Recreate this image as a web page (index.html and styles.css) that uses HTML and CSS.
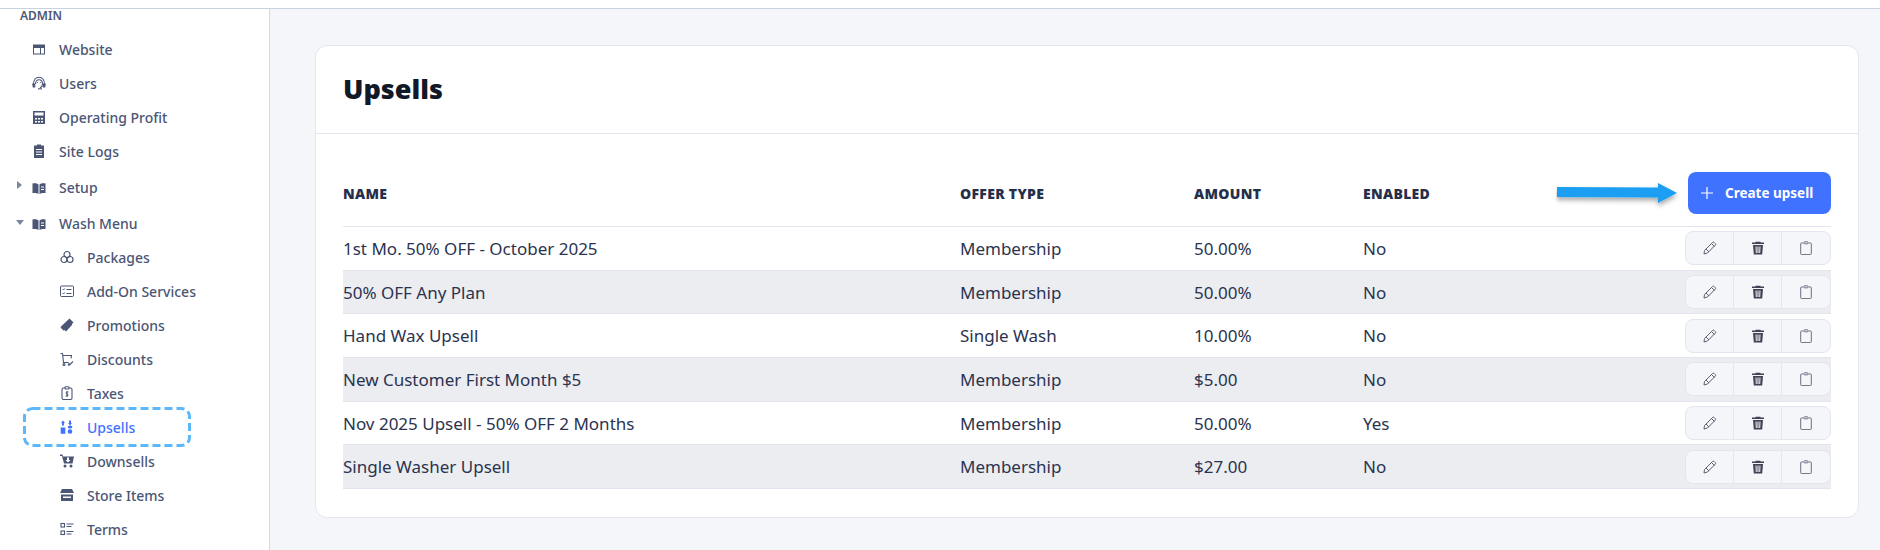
FILE: index.html
```html
<!DOCTYPE html>
<html lang="en">
  <head>
    <meta charset="UTF-8" />
    <meta name="viewport" content="width=device-width, initial-scale=1.0" />
    <title>Upsells</title>
    <link rel="stylesheet" href="styles.css">
  </head>
  <body>
    <div class="topbar"></div>
    <div class="layout">
      <aside class="sidebar">
        <div class="nav-title">ADMIN</div>
        <nav class="nav-group">
          <a class="nav-item">
            <svg class="nav-icon" viewBox="0 0 14 14"><path d="M1 2.500h12v10H1z M2 6v5.500h6V6z M9 6v5.500h3V6z" fill="#4b5675" fill-rule="evenodd"/></svg>
            Website
          </a>
          <a class="nav-item">
            <svg class="nav-icon" viewBox="0 0 14 14" fill="none" stroke="#4b5675" stroke-width="1.100"><path d="M1.500 8.500C1.500 4 3.800 1.200 7 1.200s5.500 2.800 5.500 7.300"/><path d="M3.500 8c0-2.500 1.500-4.300 3.500-4.300s3.500 1.800 3.500 4.300c0 2-1.200 3.200-2.500 3.800"/><path d="M6 12.800h4"/><path d="M.8 8h1.900v3H1.300z" fill="#4b5675"/><path d="M13.200 8h-1.900v3h1.400z" fill="#4b5675"/><path d="M5.500 6.300v.6M8.500 6.300v.6"/></svg>
            Users
          </a>
          <a class="nav-item">
            <svg class="nav-icon" viewBox="0 0 14 14"><path d="M1 1h12v13H1z M2.500 2.500v3h9v-3z M3 8v1.500h2V8z M6 8v1.500h2V8z M9 8v1.500h2V8z M3 11v1.500h2V11z M6 11v1.500h2V11z M9 11v1.500h2V11z" fill="#4b5675" fill-rule="evenodd"/></svg>
            Operating Profit
          </a>
          <a class="nav-item">
            <svg class="nav-icon" viewBox="0 0 14 14"><path d="M5 1.500V.5h4v1h3v12.500H2V1.500z M4 5v1h6V5z M4 7.500v1h6v-1z M4 10v1h6v-1z" fill="#4b5675" fill-rule="evenodd"/></svg>
            Site Logs
          </a>
        </nav>
        <a class="nav-item nav-parent">
          <span class="caret caret-right"></span>
          <svg class="nav-icon" viewBox="0 0 14 14"><path d="M0.500 2.500C3 2 5 2.200 6.500 3.500V13C5 12 3 11.800 .5 12z" fill="#4b5675"/><path d="M7.500 3.500C9 2.200 11 2 13.500 2.500V12C11 11.800 9 12 7.500 13z M9 5.500v1h3v-1z M9 8v1h3V8z" fill="#4b5675" fill-rule="evenodd"/></svg>
          Setup
        </a>
        <a class="nav-item nav-parent">
          <span class="caret caret-down"></span>
          <svg class="nav-icon" viewBox="0 0 14 14"><path d="M0.500 2.500C3 2 5 2.200 6.500 3.500V13C5 12 3 11.800 .5 12z" fill="#4b5675"/><path d="M7.500 3.500C9 2.200 11 2 13.500 2.500V12C11 11.800 9 12 7.500 13z M9 5.500v1h3v-1z M9 8v1h3V8z" fill="#4b5675" fill-rule="evenodd"/></svg>
          Wash Menu
        </a>
        <nav class="nav-sub">
          <a class="nav-item">
            <svg class="nav-icon" viewBox="0 0 14 14" fill="none" stroke="#4b5675" stroke-width="1.200"><circle cx="7" cy="4.500" r="3"/><circle cx="4" cy="9.500" r="3"/><circle cx="10" cy="9.500" r="3"/></svg>
            Packages
          </a>
          <a class="nav-item">
            <svg class="nav-icon" viewBox="0 0 14 14" fill="none" stroke="#4b5675" stroke-width="1"><rect x=".5" y="2" width="13" height="10.500" rx="1"/><path d="M2.500 5l1 1 1.200-1.500M2.500 9l1 1 1.200-1.500M6.500 5.500h5M6.500 9.500h5"/></svg>
            Add-On Services
          </a>
          <a class="nav-item">
            <svg class="nav-icon" viewBox="0 0 14 14"><path d="M9.500 .5L13.500 4.500 12 6 12 7 6 13.500 4.500 12 3.500 12.500 .5 9.500 1.500 8z" fill="#4b5675"/></svg>
            Promotions
          </a>
          <a class="nav-item">
            <svg class="nav-icon" viewBox="0 0 14 14" fill="none" stroke="#4b5675" stroke-width="1.100"><path d="M.5 1.500h2l1 9h5M3 3.500h8.500l-.5 3"/><circle cx="4" cy="12.500" r="1"/><circle cx="9" cy="12.500" r=".8"/><path d="M10 12.500l3-3"/></svg>
            Discounts
          </a>
          <a class="nav-item">
            <svg class="nav-icon" viewBox="0 0 14 14" fill="none" stroke="#4b5675" stroke-width="1.100"><rect x="2" y="2" width="10" height="11.500" rx="1.500"/><rect x="5" y=".7" width="4" height="2.300" rx=".8" fill="#fff"/><path d="M8.500 6H6.300v2h1.500v2H5.500M7 5v6" stroke-width=".9"/></svg>
            Taxes
          </a>
          <a class="nav-item nav-active">
            <svg class="nav-icon" viewBox="0 0 14 14"><path d="M3 .5L5 3H4v2.500H2V3H1z M.7 7.500h4.600v6.200H.7z M10 5.500L8 3h1V.5h2V3h1z M7.700 7a2.300 1.500 0 1 0 4.600 0 2.300 1.500 0 1 0-4.600 0z M7.700 11.500a2.300 2.300 0 1 0 4.600 0 2.300 2.300 0 1 0-4.600 0z" fill="#3e72ff"/></svg>
            Upsells
            <svg class="focus-ring" viewBox="0 0 168 40" width="168" height="40"><rect x="1.500" y="1.500" width="165" height="37" rx="8" fill="none" stroke="#5cb8fb" stroke-width="3" stroke-dasharray="8 4"/></svg>
          </a>
          <a class="nav-item">
            <svg class="nav-icon" viewBox="0 0 14 14"><path d="M0 .5h2.500l.5 2h11l-1.500 7H4L2 2H0z M7 3.500v2.500H5.500L8 8.500 10.500 6H9V3.500z" fill="#4b5675" fill-rule="evenodd"/><circle cx="5" cy="12" r="1.500" fill="#4b5675"/><circle cx="11" cy="12" r="1.500" fill="#4b5675"/></svg>
            Downsells
          </a>
          <a class="nav-item">
            <svg class="nav-icon" viewBox="0 0 14 14"><path d="M2 1h10l2 4H0z M1 6.500h12V13H1z M3 8.500v1.500h8V8.500z" fill="#4b5675" fill-rule="evenodd"/></svg>
            Store Items
          </a>
          <a class="nav-item">
            <svg class="nav-icon" viewBox="0 0 14 14" fill="none" stroke="#4b5675" stroke-width="1.100"><rect x="1" y="1.500" width="3.500" height="3.500"/><rect x="1" y="9" width="3.500" height="3.500"/><path d="M6.500 2h7M6.500 4.500h5M6.500 9.500h7M6.500 12h5"/></svg>
            Terms
          </a>
        </nav>
      </aside>

      <main class="content">
        <section class="card">
          <header class="card-header">
            <h1>Upsells</h1>
          </header>
          <div class="card-body">
            <table class="upsell-table">
              <colgroup>
                <col class="col-name">
                <col class="col-type">
                <col class="col-amount">
                <col class="col-enabled">
                <col>
              </colgroup>
              <thead>
                <tr>
                  <th>NAME</th>
                  <th>OFFER TYPE</th>
                  <th>AMOUNT</th>
                  <th>ENABLED</th>
                  <th class="col-actions">
                    <button class="create-btn">
                      <svg viewBox="0 0 12 12" width="12" height="12" fill="none" stroke="#fff" stroke-width="1.200"><path d="M6 0v12M0 6h12"/></svg>
                      Create upsell
                    </button>
                  </th>
                </tr>
              </thead>
              <tbody id="rows"></tbody>
            </table>
          </div>
        </section>
      </main>
    </div>

    <svg class="callout-arrow" viewBox="0 0 126 30" width="126" height="30">
      <defs>
        <filter id="arrow-shadow" x="-10%" y="-50%" width="120%" height="200%">
          <feDropShadow dx="0" dy="3" stdDeviation="2.500" flood-color="#000" flood-opacity="0.35"/>
        </filter>
      </defs>
      <path d="M1 4L102 4.500V0L121 10 102 20V14.500L1 14z" fill="#1a9ff2" filter="url(#arrow-shadow)"/>
    </svg>

    <script>
      const upsells = [
        { name: "1st Mo. 50% OFF - October 2025", type: "Membership", amount: "50.00%", enabled: "No" },
        { name: "50% OFF Any Plan", type: "Membership", amount: "50.00%", enabled: "No" },
        { name: "Hand Wax Upsell", type: "Single Wash", amount: "10.00%", enabled: "No" },
        { name: "New Customer First Month $5", type: "Membership", amount: "$5.00", enabled: "No" },
        { name: "Nov 2025 Upsell - 50% OFF 2 Months", type: "Membership", amount: "50.00%", enabled: "Yes" },
        { name: "Single Washer Upsell", type: "Membership", amount: "$27.00", enabled: "No" },
      ];

      const actions = `
        <div class="btn-group">
          <button class="icon-btn" aria-label="Edit">
            <svg viewBox="0 0 14 14" width="14" height="14" fill="none" stroke="#5b5f6e" stroke-width="1"><path d="M1.500 9.500L9.500 1.500a1.200 1.200 0 0 1 1.700 0l1 1a1.200 1.200 0 0 1 0 1.700L4.500 12 1 13z"/><path d="M8.500 2.500l3 3M3 8l3 3"/></svg>
          </button>
          <button class="icon-btn" aria-label="Delete">
            <svg viewBox="0 0 14 14" width="14" height="14"><path d="M4.500 1.500V.7h5v.8H13V3H1V1.500z M2 4h10l-.8 9.500H2.800z M4.500 5.500l.3 6.500h1L5.500 5.500z M6.500 5.500V12h1V5.500z M8.500 5.500L8.200 12h1l.3-6.500z" fill="#3f4254" fill-rule="evenodd"/></svg>
          </button>
          <button class="icon-btn" aria-label="Copy">
            <svg viewBox="0 0 14 14" width="14" height="14" fill="none" stroke="#6b6f80" stroke-width="1"><path d="M4.500 2H2.500a.8.8 0 0 0-.8.800v10a.8.8 0 0 0 .8.800h9a.8.8 0 0 0 .8-.8v-10a.8.8 0 0 0-.8-.8H9.500"/><rect x="5" y=".8" width="4" height="2" rx=".6"/></svg>
          </button>
        </div>
      `;

      document.getElementById("rows").innerHTML = upsells
        .map(
          (u) => `
          <tr>
            <td>${u.name}</td>
            <td>${u.type}</td>
            <td>${u.amount}</td>
            <td>${u.enabled}</td>
            <td class="col-actions">${actions}</td>
          </tr>
        `
        )
        .join("");
    </script>
  </body>
</html>
```

FILE: styles.css
```css
* {
  margin: 0;
  padding: 0;
  box-sizing: border-box;
}

html,
body {
  height: 550px;
  overflow: hidden;
}

body {
  background-color: #f5f6fa;
  color: #252f4a;
  font-family: "Noto Sans", "Open Sans", sans-serif;
  position: relative;
}

.topbar {
  height: 9px;
  background-color: #fff;
  border-bottom: 1px solid #c9d2e3;
}

.layout {
  display: flex;
  height: 541px;
}

.sidebar {
  width: 270px;
  flex-shrink: 0;
  background-color: #fff;
  border-right: 1px solid #d5d9e6;
  color: #4b5675;
}

.nav-title {
  font-size: 12px;
  font-weight: 600;
  line-height: 16px;
  padding-left: 20px;
  margin-top: -1px;
  margin-bottom: 8px;
}

.nav-item {
  position: relative;
  display: flex;
  align-items: center;
  height: 34px;
  padding-left: 32px;
  font-size: 14px;
  font-weight: 500;
  white-space: nowrap;
}

.nav-icon {
  width: 14px;
  height: 14px;
  margin-right: 13px;
  flex-shrink: 0;
}

.nav-group {
  margin-bottom: 2px;
}

.nav-parent {
  height: 35px;
}

.nav-parent + .nav-parent {
  margin-top: 1px;
}

.caret {
  position: absolute;
  width: 0;
  height: 0;
}

.caret-right {
  top: 11px;
  left: 17px;
  border-top: 4.5px solid transparent;
  border-bottom: 4.5px solid transparent;
  border-left: 5px solid #7c859f;
}

.caret-down {
  top: 14px;
  left: 16px;
  border-left: 4.5px solid transparent;
  border-right: 4.5px solid transparent;
  border-top: 5px solid #7c859f;
}

.nav-sub {
  margin-top: -1px;
}

.nav-sub .nav-item {
  padding-left: 60px;
}

.nav-active {
  color: #3e72ff;
}

.focus-ring {
  position: absolute;
  left: 23px;
  top: -3px;
}

.content {
  flex: 1;
  padding: 36px 21px 0 45px;
}

.card {
  background-color: #fff;
  border: 1px solid #e4e6ef;
  border-radius: 12px;
  height: 473px;
}

.card-header {
  height: 88px;
  padding-left: 27px;
  display: flex;
  align-items: center;
  border-bottom: 1px solid #e4e6ef;
}

.card-header h1 {
  font-size: 27px;
  font-weight: 900;
  color: #111827;
  margin-top: -2px;
}

.card-body {
  padding: 38px 27px 0;
}

.upsell-table {
  width: 100%;
  border-collapse: collapse;
  table-layout: fixed;
}

.col-name {
  width: 617px;
}

.col-type {
  width: 234px;
}

.col-amount {
  width: 169px;
}

.col-enabled {
  width: 200px;
}

.upsell-table th {
  text-align: left;
  font-size: 14px;
  font-weight: 900;
  letter-spacing: 0.3px;
  color: #252f4a;
  height: 54px;
  padding-bottom: 12px;
  border-bottom: 1px solid #e4e6ef;
}

.upsell-table td {
  height: 43.7px;
  font-size: 17px;
  color: #2b3350;
  border-bottom: 1px solid #e4e6ef;
}

.upsell-table tbody tr:nth-child(even) {
  background-color: #ecedf0;
}

.upsell-table .col-actions {
  text-align: right;
}

.create-btn {
  display: inline-flex;
  align-items: center;
  gap: 12px;
  width: 143px;
  height: 42px;
  padding-left: 13px;
  background-color: #3e72ff;
  color: #fff;
  border: none;
  border-radius: 8px;
  font-family: "Noto Sans", sans-serif;
  font-size: 13.5px;
  font-weight: 700;
  letter-spacing: 0;
}

.btn-group {
  display: inline-flex;
  vertical-align: middle;
  background-color: #f5f6fa;
  border: 1px solid #e4e6ef;
  border-radius: 8px;
  overflow: hidden;
}

.icon-btn {
  display: flex;
  align-items: center;
  justify-content: center;
  width: 48px;
  height: 32px;
  background: none;
  border: none;
  border-right: 1px solid #e4e6ef;
}

.icon-btn:last-child {
  border-right: none;
}

.callout-arrow {
  position: absolute;
  left: 1556px;
  top: 183px;
}
```
